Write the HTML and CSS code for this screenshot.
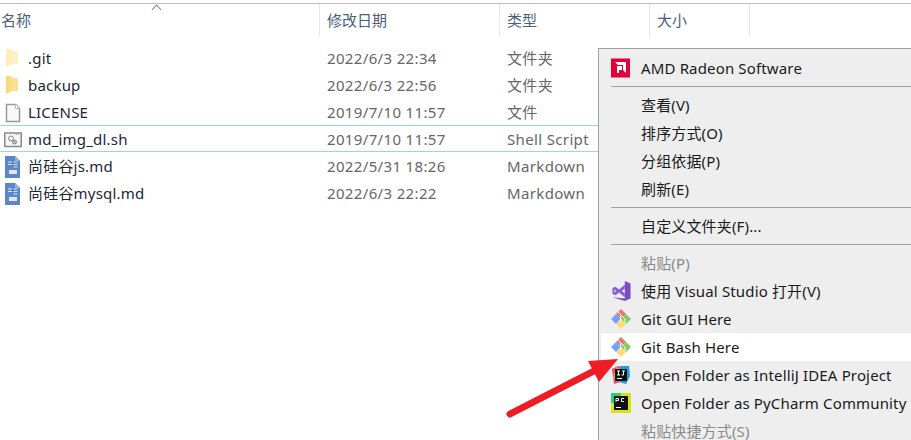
FILE: index.html
```html
<!DOCTYPE html>
<html lang="zh-CN">
  <head>
    <meta charset="UTF-8" />
    <title>Explorer context menu</title>
    <link rel="stylesheet" href="styles.css">
  </head>
  <body>
    <svg class="defs" width="0" height="0">
      <symbol id="folder" viewBox="0 0 18 20">
        <path d="M2 0h5l1 2v13l-6 3z" fill="currentColor"/>
        <path d="M7 2h7v13H2l5-2z" fill="currentColor" opacity="0.8"/>
        <path d="M6 3v11" stroke="#fff" stroke-opacity="0.35"/>
      </symbol>
      <symbol id="md" viewBox="0 0 18 22">
        <path d="M1 0h10l5 5v17H1z" fill="#5b86c8"/>
        <path d="M11 0v5h5z" fill="#8fb0e0"/>
        <path d="M4 6h4M4 8.500h4M9.500 6h4M9.500 8.500h4M9.500 11h4" stroke="#dfe8f5"/>
        <rect x="5" y="14" width="8" height="4" fill="#dfe8f5"/>
      </symbol>
      <symbol id="git" viewBox="0 0 20 20">
        <path d="M10 0l5 5-5 5-5-5z" fill="#f0736d"/>
        <path d="M0 10l5-5 5 5-5 5z" fill="#6ea4ff"/>
        <path d="M20 10l-5-5-5 5 5 5z" fill="#7fcf5f"/>
        <path d="M10 20l5-5-5-5-5 5z" fill="#ffdc73"/>
        <path d="M7 3l7 7v4M10 6l-1 7" stroke="#fff" stroke-width="1" fill="none"/>
      </symbol>
    </svg>

    <header class="cols">
      <div class="col name-col">名称<span class="sort"></span></div>
      <div class="col">修改日期</div>
      <div class="col">类型</div>
      <div class="col">大小</div>
    </header>

    <div class="files">
      <div class="cols row">
        <div class="name"><svg class="ficon pale"><use href="#folder"/></svg>.git</div>
        <div>2022/6/3 22:34</div>
        <div>文件夹</div>
      </div>
      <div class="cols row">
        <div class="name"><svg class="ficon yellow"><use href="#folder"/></svg>backup</div>
        <div>2022/6/3 22:56</div>
        <div>文件夹</div>
      </div>
      <div class="cols row">
        <div class="name">
          <svg class="ficon" viewBox="0 0 18 20"><path d="M2.500 1.500h9l4 4v13h-13z" fill="#f7f9fa" stroke="#9a9a9a" stroke-width="1.500"/><path d="M11.500 1.500v4h4" fill="#fff" stroke="#b5b5b5"/></svg>LICENSE
        </div>
        <div>2019/7/10 11:57</div>
        <div>文件</div>
      </div>
      <div class="cols row selected">
        <div class="name">
          <svg class="ficon" viewBox="0 0 18 20"><rect x="0.750" y="3" width="16.500" height="13.500" fill="#f6f6f6" stroke="#8a8a8a" stroke-width="1.500"/><path d="M10 4.500h6" stroke="#bbb" stroke-dasharray="1 1"/><circle cx="7" cy="8.500" r="2.500" fill="none" stroke="#8a8a8a"/><circle cx="10.500" cy="12" r="2" fill="#9fc3e6" stroke="#8a8a8a"/></svg>md_img_dl.sh
        </div>
        <div>2019/7/10 11:57</div>
        <div>Shell Script</div>
      </div>
      <div class="cols row">
        <div class="name"><svg class="ficon tall"><use href="#md"/></svg>尚硅谷js.md</div>
        <div>2022/5/31 18:26</div>
        <div>Markdown</div>
      </div>
      <div class="cols row">
        <div class="name"><svg class="ficon tall"><use href="#md"/></svg>尚硅谷mysql.md</div>
        <div>2022/6/3 22:22</div>
        <div>Markdown</div>
      </div>
    </div>

    <div class="menu">
      <div class="item">
        <svg class="icon" viewBox="0 0 20 20"><rect width="19" height="19" y="0.500" fill="#e2003a"/><path d="M4 4h11v11l-3-3V7H7zM6 8h5v4H8v3H6z" fill="#fff"/></svg>AMD Radeon Software
      </div>
      <div class="sep"></div>
      <div class="item"><span class="icon"></span>查看(V)</div>
      <div class="item"><span class="icon"></span>排序方式(O)</div>
      <div class="item"><span class="icon"></span>分组依据(P)</div>
      <div class="item"><span class="icon"></span>刷新(E)</div>
      <div class="sep"></div>
      <div class="item"><span class="icon"></span>自定义文件夹(F)...</div>
      <div class="sep"></div>
      <div class="item off"><span class="icon"></span>粘贴(P)</div>
      <div class="item">
        <svg class="icon" viewBox="0 0 20 21"><path d="M14 0l6 2.500v16L14 21 1 17l13 1.500z" fill="#7b4fc4"/><path fill-rule="evenodd" d="M14 4L8 9 4 6 1 7.500v6L4 15l4-3 6 5zM14 8v5l-3-2.500zM3 9v3l2-1.500z" fill="#8a5cd0"/></svg>使用 Visual Studio 打开(V)
      </div>
      <div class="item"><svg class="icon"><use href="#git"/></svg>Git GUI Here</div>
      <div class="item active"><svg class="icon"><use href="#git"/></svg>Git Bash Here</div>
      <div class="item">
        <svg class="icon" viewBox="0 0 20 20"><path d="M1 4l6-3 5 2-3 14-6 2z" fill="#f0447c"/><path d="M9 1h9l1 10-4 8-7-2z" fill="#1b9ee8"/><path d="M2 13l3-11 5 2-4 13z" fill="#f9a03c"/><rect x="4" y="4" width="12" height="12" fill="#111"/><path d="M6 6h3M7.500 6v4M6 10h3M11 6h3M12.500 6v4h-2M6 13.500h5" stroke="#fff" fill="none"/></svg>Open Folder as IntelliJ IDEA Project
      </div>
      <div class="item">
        <svg class="icon" viewBox="0 0 20 20"><rect width="20" height="20" fill="#d8e21a"/><rect width="10" height="10" fill="#27d07c"/><rect x="3" y="3" width="14" height="14" fill="#111"/><path d="M5 9V5.500h2.500v2H5M13 5.500h-2.500v3H13M5 14.500h5" stroke="#fff" fill="none"/></svg>Open Folder as PyCharm Community
      </div>
      <div class="item off"><span class="icon"></span>粘贴快捷方式(S)</div>
    </div>

    <!-- red annotation arrow drawn over the screenshot -->
    <svg class="arrow" width="130" height="80" viewBox="0 0 130 80">
      <path d="M10 64L94 21" stroke="#ee1c25" stroke-width="7" stroke-linecap="round"/>
      <path d="M118 9L88 11 99 32z" fill="#ee1c25"/>
    </svg>
  </body>
</html>
```

FILE: styles.css
```css
html,
body {
  height: 100%;
}

body {
  margin: 0;
  overflow: hidden;
  position: relative;
  background-color: white;
  color: #1a1a1a;
  font-family: "Noto Sans", "Noto Sans CJK SC", sans-serif;
  font-size: 15px;
}

.defs {
  position: absolute;
}

.cols {
  display: grid;
  grid-template-columns: 320px 180px 150px 100px;
}

header.cols {
  margin-top: 3px;
  height: 34px;
  border-top: 1px solid #bfbfbf;
  width: 100%;
  color: #4c607a;
}

.col {
  height: 32px;
  line-height: 32px;
  padding-left: 7px;
  border-right: 1px solid #e5e5e5;
  box-sizing: border-box;
}

.name-col {
  padding-left: 1px;
  position: relative;
}

.sort {
  position: absolute;
  top: 2px;
  left: 153px;
  width: 6px;
  height: 6px;
  border-top: 1px solid #8a8a8a;
  border-left: 1px solid #8a8a8a;
  transform: rotate(45deg);
}

.files {
  margin-top: 7px;
}

.row {
  height: 27px;
  line-height: 27px;
  color: #666;
  box-sizing: border-box;
}

.row > div {
  padding-left: 7px;
  white-space: nowrap;
  letter-spacing: 0.35px;
}

.row > .name {
  display: flex;
  align-items: center;
  padding-left: 4px;
  color: #1b2735;
  letter-spacing: 0.2px;
}

.selected {
  margin: -1px 0 1px;
  border-top: 1px solid #99d1ff;
  border-bottom: 1px solid #99d1ff;
}

.ficon {
  width: 18px;
  height: 20px;
  margin-right: 6px;
  flex: none;
}

.ficon.tall {
  height: 22px;
}

.pale {
  color: #fdeeb8;
}

.yellow {
  color: #fcd977;
}

.menu {
  position: absolute;
  top: 48px;
  left: 598px;
  width: 340px;
  padding: 5px 0 0 2px;
  box-sizing: border-box;
  background-color: #eeeeee;
  border: 1px solid #a0a0a0;
  color: #1a1a1a;
  letter-spacing: 0.15px;
}

.item {
  display: flex;
  align-items: center;
  height: 28px;
  line-height: 27px;
  white-space: nowrap;
}

.item.active {
  background-color: white;
}

.item.off {
  color: #8a8a8a;
}

.icon {
  width: 20px;
  height: 20px;
  margin: 0 10px 0 10px;
  flex: none;
}

.sep {
  height: 1px;
  margin: 4px 0 4px 10px;
  background-color: #a0a0a0;
}

.arrow {
  position: absolute;
  top: 350px;
  left: 500px;
}
```
